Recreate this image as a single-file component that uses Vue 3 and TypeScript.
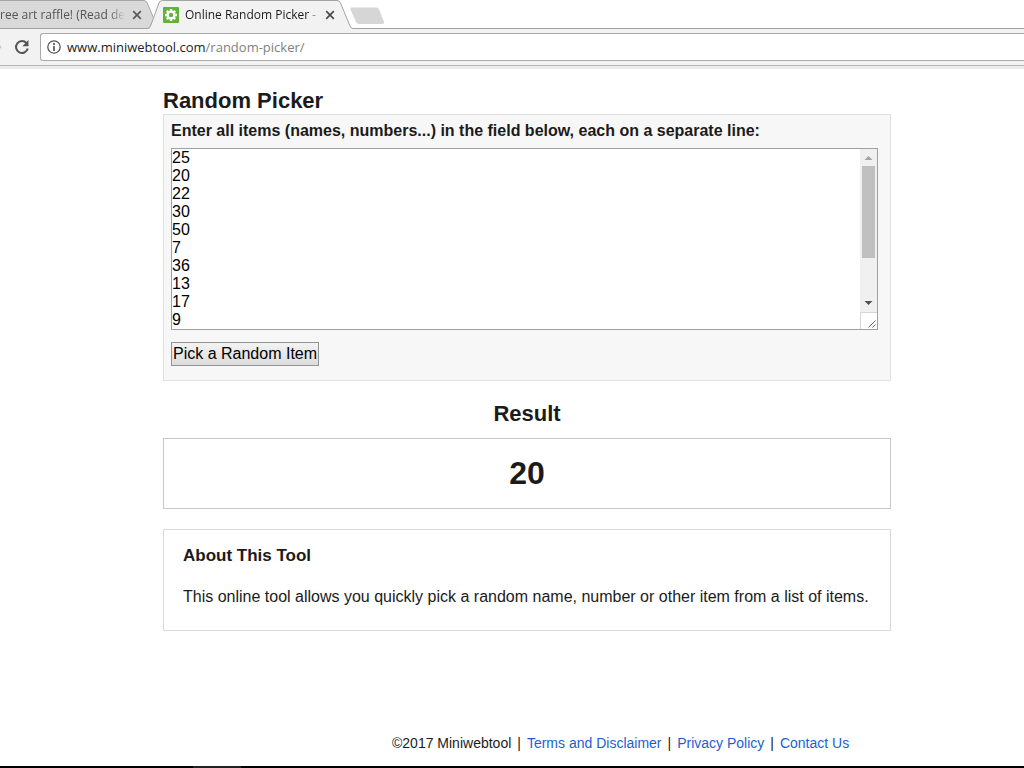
<script setup lang="ts">
import { ref } from 'vue'

const items = ref<string>([25, 20, 22, 30, 50, 7, 36, 13, 17, 9, 4, 41, 12, 28, 33, 2, 19, 45].join('\n'))
const result = ref<string>('20')
const address = 'www.miniwebtool.com/random-picker/'

function pick(): void {
  const list = items.value.split('\n').filter((line) => line.trim() !== '')
  if (list.length > 0) {
    result.value = list[Math.floor(Math.random() * list.length)]
  }
}
</script>

<template>
  <div class="screen">
    <header class="browser">
      <div class="tabs">
        <svg class="tab-shapes" width="400" height="29" viewBox="0 0 400 29" aria-hidden="true">
          <path d="M0 .5H144Q146 .5 147 2.500L155 22 152 28.500H0Z" fill="#d9d9d9" />
          <path d="M0 .5H144Q146 .5 147 2.500L154 19" fill="none" stroke="#a6a6a6" />
          <path d="M0 28.500H150L158 3Q159 .5 161 .5H337Q339.500 .5 340.500 3L350 26Q351 28.500 353 28.500H400V29H0Z" fill="#f2f2f2" />
          <path d="M0 28.500H147Q149.500 28.500 150.500 26L159 3Q160 .5 162.500 .5H337Q339.500 .5 340.500 3L350 26Q351 28.500 353 28.500H400" fill="none" stroke="#a3a3a3" />
          <path d="M351.500 7.500H376Q378 7.500 379 9L384 22Q384.500 24 382.500 24H359Q357 24 356 22L350.500 9.500Q350 7.500 351.500 7.500Z" fill="#d6d6d6" />
        </svg>
        <div class="tab first">
          <span class="tab-text">ree art raffle! (Read desc</span>
          <button class="close" type="button" aria-label="Close tab">
            <svg width="10" height="10" viewBox="0 0 10 10"><path d="M1.200 1.200l7.600 7.600M8.800 1.200l-7.600 7.600" stroke="#5a5a5a" stroke-width="1.700" /></svg>
          </button>
        </div>
        <div class="tab second">
          <svg class="favicon" width="16" height="16" viewBox="0 0 16 16" aria-hidden="true">
            <rect width="16" height="16" rx="1" fill="#62b236" />
            <path d="M8 2v12M2 8h12M3.800 3.800l8.400 8.400M3.800 12.200l8.400-8.400" stroke="#fff" stroke-width="2.400" />
            <circle cx="8" cy="8" r="4.600" fill="#fff" />
            <circle cx="8" cy="8" r="2.200" fill="#62b236" />
          </svg>
          <span class="tab-text">Online Random Picker - P</span>
          <button class="close" type="button" aria-label="Close tab">
            <svg width="10" height="10" viewBox="0 0 10 10"><path d="M1.200 1.200l7.600 7.600M8.800 1.200l-7.600 7.600" stroke="#4a4a4a" stroke-width="1.700" /></svg>
          </button>
        </div>
      </div>
      <div class="toolbar">
        <svg class="forward" width="2" height="4" viewBox="0 0 2 4" aria-hidden="true"><path d="M0 0L1.500 2L0 4Z" fill="#c4c4c4" /></svg>
        <button class="reload" type="button" aria-label="Reload">
          <svg width="16" height="16" viewBox="0 0 16 16"><path d="M12.600 4.100A6 6 0 1 0 13.800 9.600" fill="none" stroke="#555" stroke-width="2" /><path d="M14.500 1v6.200H8.300Z" fill="#555" /></svg>
        </button>
        <div class="omnibox">
          <svg width="14" height="14" viewBox="0 0 14 14" aria-hidden="true"><circle cx="7" cy="7" r="6.200" fill="none" stroke="#555" stroke-width="1.300" /><path d="M7 3v2M7 6v5" stroke="#555" stroke-width="1.700" /></svg>
          <a class="address" :href="'http://' + address">www.miniwebtool.com<span>/random-picker/</span></a>
        </div>
      </div>
    </header>

    <main class="page">
      <h1>Random Picker</h1>
      <form class="picker" @submit.prevent="pick">
        <label for="items">Enter all items (names, numbers...) in the field below, each on a separate line:</label>
        <div class="field">
          <textarea id="items" v-model="items" rows="10" spellcheck="false"></textarea>
          <div class="scrollbar" aria-hidden="true">
            <svg class="arrow" width="17" height="17" viewBox="0 0 17 17"><path d="M4.500 11L8.500 7L12.500 11Z" fill="#a3a3a3" /></svg>
            <div class="track"><div class="thumb"></div></div>
            <svg class="arrow" width="17" height="17" viewBox="0 0 17 17"><path d="M4.500 6H12.500L8.500 10Z" fill="#505050" /></svg>
            <svg class="grip" width="17" height="17" viewBox="0 0 17 17"><path d="M0 .5H17M.5 0V17" stroke="#d6d6d6" /><path d="M8.500 15.500l7-7M12.500 15.500l3-3" stroke="#666" /></svg>
          </div>
        </div>
        <button class="pick" type="submit">Pick a Random Item</button>
      </form>

      <h2>Result</h2>
      <output class="result" for="items">{{ result }}</output>

      <section class="about">
        <h3>About This Tool</h3>
        <p>This online tool allows you quickly pick a random name, number or other item from a list of items.</p>
      </section>
    </main>

    <footer class="footer">
      <span>©2017 Miniwebtool</span>
      <span>|</span>
      <a href="#terms">Terms and Disclaimer</a>
      <span>|</span>
      <a href="#privacy">Privacy Policy</a>
      <span>|</span>
      <a href="#contact">Contact Us</a>
    </footer>
    <div class="taskbar"><span></span></div>
  </div>
</template>

<style>
body {
  margin: 0;
  background: #fff;
}
</style>

<style scoped>
.screen {
  display: flex;
  flex-direction: column;
  min-height: 100vh;
  overflow: hidden;
  font-family: "Liberation Sans", Arial, sans-serif;
  font-size: 16px;
  line-height: 18px;
  color: #1b1b1b;
}
button {
  margin: 0;
  padding: 0;
  border: 0;
  background: none;
  font: inherit;
  color: inherit;
}
.browser {
  font-family: "Open Sans", "Noto Sans", sans-serif;
}
.tabs {
  position: relative;
  display: flex;
  height: 28px;
  border-bottom: 1px solid #a3a3a3;
}
.tab-shapes {
  position: absolute;
  top: 0;
  left: 0;
}
.tab {
  position: relative;
  display: flex;
  align-items: center;
  height: 29px;
  font-size: 12px;
}
.tab-text {
  flex: 1;
  overflow: hidden;
  white-space: nowrap;
}
.first {
  width: 143px;
  color: #555;
}
.first .tab-text {
  margin-right: 6px;
  mask-image: linear-gradient(to right, #000 88%, transparent);
}
.second {
  width: 173px;
  margin-left: 20px;
}
.second .tab-text {
  margin: 0 6px;
  mask-image: linear-gradient(to right, #000 94%, transparent);
}
.close {
  display: flex;
  width: 12px;
  justify-content: center;
}
.favicon {
  flex: none;
}
.toolbar {
  display: flex;
  align-items: center;
  height: 36px;
  background: #f2f2f2;
  border-bottom: 1px solid #b6b6b6;
  box-shadow: 0 3px 0 #ececec;
}
.reload {
  display: flex;
  margin: 0 10px 0 12px;
}
.omnibox {
  flex: 1;
  display: flex;
  align-items: center;
  gap: 6px;
  height: 26px;
  padding-left: 6px;
  background: #fff;
  border: 1px solid #a9a9a9;
  border-right: 0;
  border-radius: 3px 0 0 3px;
}
.address {
  font-size: 13px;
  color: #222;
  text-decoration: none;
}
.address span {
  color: #808080;
}
.page {
  flex: 1;
  padding: 22px 133px 0 163px;
}
h1,
h2 {
  margin: 0;
  font-size: 22px;
  line-height: 26px;
}
.picker {
  padding: 7px 12px 14px 7px;
  background: #f7f7f7;
  border: 1px solid #e0e0e0;
}
label {
  display: block;
  font-weight: bold;
}
.field {
  display: flex;
  margin: 8px 0 12px;
  background: #fff;
  border: 1px solid #a0a0a0;
}
textarea {
  flex: 1;
  min-width: 0;
  margin: 0;
  padding: 0;
  border: 0;
  outline: 0;
  resize: none;
  overflow: hidden;
  background: #fff;
  font: inherit;
  color: #000;
}
.scrollbar {
  display: flex;
  flex-direction: column;
  width: 17px;
  background: #f0f0f0;
}
.scrollbar svg {
  flex: none;
}
.track {
  flex: 1;
}
.thumb {
  height: 71%;
  margin: 0 2px;
  background: #c0c0c0;
}
.grip {
  background: #fff;
}
.pick {
  display: block;
  height: 24px;
  padding: 0 1px;
  border: 1px solid #949494;
  background: linear-gradient(#f3f3f3, #dcdcdc);
  color: #000;
}
h2 {
  margin: 20px 0 11px;
  text-align: center;
}
.result {
  display: block;
  padding: 16px 0 17px;
  border: 1px solid #c8c8c8;
  font-size: 32px;
  font-weight: bold;
  line-height: 36px;
  text-align: center;
}
.about {
  margin-top: 20px;
  padding: 17px 19px 24px;
  border: 1px solid #dadada;
}
h3 {
  margin: 0 0 23px;
  font-size: 17px;
  line-height: 18px;
}
p {
  margin: 0;
}
.footer {
  display: flex;
  gap: 6px;
  padding: 0 171px 14px 392px;
  font-size: 14px;
  white-space: nowrap;
}
.footer a {
  color: #1a5fd0;
  text-decoration: none;
}
.taskbar {
  height: 2px;
  padding-left: 193px;
  background: #000;
}
.taskbar span {
  display: block;
  width: 48px;
  height: 2px;
  background: #222;
}
</style>
